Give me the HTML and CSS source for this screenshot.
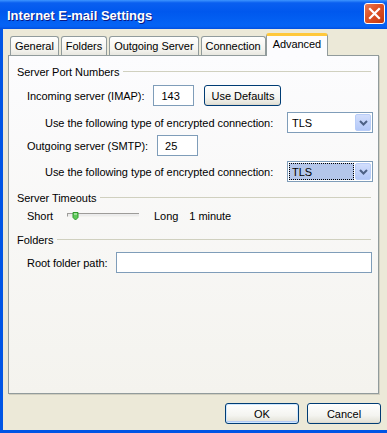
FILE: index.html
```html
<!DOCTYPE html>
<html lang="en">
<head>
  <meta charset="UTF-8">
  <title>Internet E-mail Settings</title>
  <link rel="stylesheet" href="styles.css">
</head>
<body>
  <div class="window">
    <div class="titlebar">
      <span class="title">Internet E-mail Settings</span>
      <button class="close" aria-label="Close">
        <svg width="13" height="13" viewBox="0 0 13 13"><path d="M2 2 L11 11 M11 2 L2 11" stroke="#fff" stroke-width="2.2" stroke-linecap="square"/></svg>
      </button>
    </div>

    <div class="client">
      <div class="tabs">
        <div class="tab">General</div>
        <div class="tab">Folders</div>
        <div class="tab">Outgoing Server</div>
        <div class="tab">Connection</div>
        <div class="tab active">Advanced</div>
      </div>

      <div class="panel">
        <div class="group first"><span>Server Port Numbers</span></div>

        <div class="row r-in">
          <label class="lbl">Incoming server (IMAP):</label>
          <input class="box port" type="text" value="143">
          <button class="btn defaults">Use Defaults</button>
        </div>

        <div class="row sub r-enc1">
          <label class="lbl">Use the following type of encrypted connection:</label>
          <div class="select"><span class="val">TLS</span><span class="arrow"><svg width="9" height="6" viewBox="0 0 9 6"><path d="M1 1 L4.5 4.5 L8 1" fill="none" stroke="#4d6185" stroke-width="2"/></svg></span></div>
        </div>

        <div class="row r-out">
          <label class="lbl">Outgoing server (SMTP):</label>
          <input class="box port" type="text" value="25">
        </div>

        <div class="row sub r-enc2">
          <label class="lbl">Use the following type of encrypted connection:</label>
          <div class="select focus"><span class="val">TLS</span><span class="arrow"><svg width="9" height="6" viewBox="0 0 9 6"><path d="M1 1 L4.5 4.5 L8 1" fill="none" stroke="#4d6185" stroke-width="2"/></svg></span></div>
        </div>

        <div class="group g-time"><span>Server Timeouts</span></div>

        <div class="row r-slider">
          <label class="lbl">Short</label>
          <div class="slider">
            <div class="track"></div>
            <svg class="thumb" width="7" height="9" viewBox="0 0 7 9"><path d="M1 0.5 H6 V5.5 L3.5 8 L1 5.5 Z" fill="#5ec95a" stroke="#2f9a2c"/><path d="M2 2 H5" stroke="#d9f5d6"/></svg>
          </div>
          <span class="lbl long">Long</span>
          <span class="lbl">1 minute</span>
        </div>

        <div class="group g-fold"><span>Folders</span></div>

        <div class="row r-root">
          <label class="lbl">Root folder path:</label>
          <input class="box path" type="text" value="">
        </div>
      </div>

      <div class="actions">
        <button class="btn ok">OK</button>
        <button class="btn">Cancel</button>
      </div>
    </div>
  </div>
</body>
</html>
```

FILE: styles.css
```css
body {
  margin: 0;
  font-family: "Liberation Sans", Arial, sans-serif;
  font-size: 11px;
  letter-spacing: -0.05px;
  color: #000;
}
.window {
  width: 387px;
  height: 433px;
  display: flex;
  flex-direction: column;
  background: #0055e5;
}
.titlebar {
  height: 29px;
  flex: none;
  display: flex;
  align-items: center;
  padding: 0 2px 0 7px;
  background: linear-gradient(#3d95ff 0%, #0a5ff0 10%, #0058ee 40%, #0463f5 85%, #0560f2 92%, #004fe0 100%);
}
.title {
  flex: 1;
  color: #fff;
  font-weight: bold;
  font-size: 13px;
  letter-spacing: 0;
  text-shadow: 1px 1px 0 #0a1883;
  padding-top: 2px;
}
.close {
  appearance: none;
  width: 21px;
  height: 21px;
  margin-top: -3px;
  padding: 0;
  border: 1px solid #fff;
  border-radius: 3px;
  background-color: #d8491b;
  background-image: linear-gradient(135deg, #e97a56 0%, #de5428 40%, #d0431a 75%, #b8360c 100%);
  display: flex;
  align-items: center;
  justify-content: center;
}
.client {
  flex: 1;
  margin: 0 0 3px 3px;
  background: #ece9d8;
  display: flex;
  flex-direction: column;
}
.tabs {
  height: 26px;
  display: flex;
  align-items: flex-end;
  gap: 2px;
  margin-left: 7px;
  position: relative;
  z-index: 1;
}
.tab {
  height: 18px;
  line-height: 19px;
  padding: 0 4px;
  border: 1px solid #919b9c;
  border-bottom: none;
  border-radius: 3px 3px 0 0;
  background: linear-gradient(#fffffe, #f4f3ee 70%, #e8e7e0);
}
.tab.active {
  height: 20px;
  margin-bottom: -1px;
  margin-left: -2px;
  padding: 0 6px;
  border-top: 3px solid #ffc83c;
  background: #fcfcfe;
  line-height: 17px;
}
.panel {
  height: 337px;
  margin: 0 8px 0 5px;
  border: 1px solid #919b9c;
  background: linear-gradient(#fcfcfe, #f4f3ee);
  box-shadow: 1px 1px 0 #d0cebf;
  display: flex;
  flex-direction: column;
  padding: 0 5px 0 8px;
}
.group {
  display: flex;
  align-items: center;
  gap: 4px;
  height: 13px;
  padding-right: 2px;
}
.group::after {
  content: "";
  flex: 1;
  height: 1px;
  background: #d0d0bf;
}
.group.first { margin-top: 9px; }
.g-time { margin-top: 9px; }
.g-fold { margin-top: 7px; }
.row {
  display: flex;
  align-items: center;
  padding-left: 10px;
}
.row.sub { padding-left: 28px; }
.r-in { margin-top: 7px; gap: 9px; }
.r-enc1 { margin-top: 6px; }
.r-out { margin-top: 2px; gap: 9px; }
.r-enc2 { margin-top: 5px; }
.r-slider { margin-top: 2px; height: 20px; }
.r-root { margin-top: 6px; gap: 9px; }
.box {
  height: 21px;
  box-sizing: border-box;
  border: 1px solid #7f9db9;
  background: #fff;
  font: inherit;
  padding: 0 7px;
  outline: none;
}
.port { width: 41px; }
.path { flex: 1; margin-right: 1px; }
.btn {
  height: 21px;
  box-sizing: border-box;
  border: 1px solid #003c74;
  border-radius: 3px;
  background: linear-gradient(#fff, #f4f4f0 60%, #e3e2d8 95%, #d6d0c5);
  font: inherit;
  color: #000;
  padding: 0;
}
.defaults { width: 77px; margin-left: 1px; }
.select {
  margin-left: auto;
  width: 86px;
  height: 21px;
  box-sizing: border-box;
  border: 1px solid #7f9db9;
  background: #fff;
  display: flex;
  align-items: center;
  padding: 1px;
}
.val {
  flex: 1;
  height: 100%;
  display: flex;
  align-items: center;
  padding-left: 3px;
  box-sizing: border-box;
}
.focus .val {
  background: #b4c6ea;
  outline: 1px dotted #000;
  outline-offset: -1px;
  margin-right: 1px;
}
.arrow {
  width: 16px;
  height: 17px;
  box-sizing: border-box;
  border: 1px solid #b9cdf8;
  border-radius: 2px;
  background: linear-gradient(#d2defc, #b3c8f8);
  display: flex;
  align-items: center;
  justify-content: center;
}
.slider {
  position: relative;
  width: 72px;
  height: 20px;
  margin-left: 14px;
}
.track {
  position: absolute;
  left: 0;
  right: 0;
  top: 7px;
  height: 2px;
  border-top: 1px solid #9d9c99;
  border-bottom: 1px solid #f3f3ef;
  border-left: 1px solid #9d9c99;
  background: #ececec;
}
.thumb {
  position: absolute;
  left: 5px;
  top: 6px;
}
.long { margin-left: 15px; margin-right: 11px; }
.actions {
  display: flex;
  justify-content: flex-end;
  gap: 8px;
  margin: 9px 6px 0 0;
}
.actions .btn { width: 74px; height: 21px; }
.ok {
  box-shadow: inset 0 0 0 1px #cee7ff, inset 0 -1px 0 1px #b2c9f4;
}
```
